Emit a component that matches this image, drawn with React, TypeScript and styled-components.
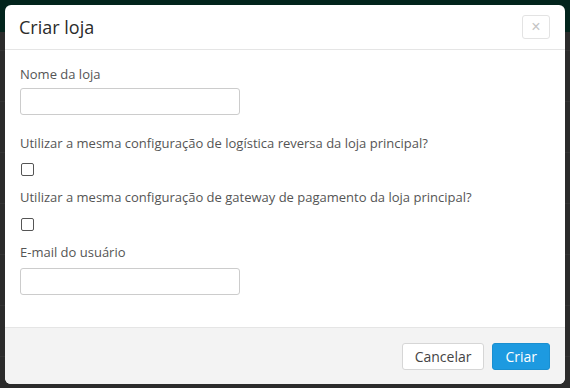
import styled, { createGlobalStyle } from 'styled-components';

const GlobalStyle = createGlobalStyle`
  html, body {
    margin: 0;
    padding: 0;
    width: 570px;
    height: 388px;
    overflow: hidden;
    font-family: 'Open Sans', 'Liberation Sans', sans-serif;
  }
`;

const Backdrop = styled.div`
  width: 570px;
  height: 388px;
  box-sizing: border-box;
  padding: 5px;
  background:
    linear-gradient(to bottom, #02241c 0, #02241c 32px, transparent 32px),
    repeating-linear-gradient(to bottom, #2b2b2b 0, #2b2b2b 50px, #333 50px, #333 51px);
  background-color: #2b2b2b;
`;

const Modal = styled.div`
  width: 560px;
  height: 379px;
  background: #fff;
  border-radius: 6px;
  overflow: hidden;
  display: flex;
  flex-direction: column;
`;

const Header = styled.div`
  height: 45px;
  box-sizing: border-box;
  padding: 0 15px 0 14px;
  border-bottom: 1px solid #e5e5e5;
  display: flex;
  align-items: center;
  justify-content: space-between;
`;

const Title = styled.h4`
  margin: 0;
  font-size: 18px;
  font-weight: 400;
  color: #2b2b2b;
`;

const CloseButton = styled.button`
  width: 28px;
  height: 24px;
  padding: 0;
  border: 1px solid #e3e3e3;
  border-radius: 3px;
  background: #fff;
  color: #c4c4c4;
  font-size: 16px;
  line-height: 1;
  display: flex;
  align-items: center;
  justify-content: center;
`;

const Body = styled.div`
  flex: 1;
  padding: 14px 15px 0;
`;

const FormGroup = styled.div<{ $gap?: number }>`
  margin-bottom: ${(p) => p.$gap ?? 11}px;
`;

const Label = styled.label`
  display: block;
  font-size: 13px;
  line-height: 20px;
  color: #555;
  margin-bottom: 4px;
`;

const Input = styled.input`
  display: block;
  width: 220px;
  height: 27px;
  box-sizing: border-box;
  border: 1px solid #ccc;
  border-radius: 3px;
  background: #fff;
`;

const Checkbox = styled.input<{ $top?: number }>`
  display: block;
  width: 13px;
  height: 13px;
  margin: ${(p) => p.$top ?? 11}px 0 0 1px;
  appearance: none;
  border: 1px solid #555;
  border-radius: 2px;
  background: #fff;
`;

const Footer = styled.div`
  height: 57px;
  box-sizing: border-box;
  border-top: 1px solid #e5e5e5;
  background: #f3f3f3;
  padding: 0 15px;
  display: flex;
  align-items: center;
  justify-content: flex-end;
  gap: 8px;
`;

const Button = styled.button<{ $primary?: boolean }>`
  height: 27px;
  box-sizing: border-box;
  padding: 0 12px;
  border-radius: 3px;
  font-family: 'Open Sans', 'Liberation Sans', sans-serif;
  font-size: 14px;
  border: 1px solid ${(p) => (p.$primary ? '#1a8fd0' : '#d6d6d6')};
  background: ${(p) => (p.$primary ? '#1d9ae0' : '#fff')};
  color: ${(p) => (p.$primary ? '#fff' : '#444')};
`;

export default function App() {
  return (
    <>
      <GlobalStyle />
      <Backdrop>
        <Modal>
          <Header>
            <Title>Criar loja</Title>
            <CloseButton>×</CloseButton>
          </Header>
          <Body>
            <FormGroup $gap={18}>
              <Label>Nome da loja</Label>
              <Input />
            </FormGroup>
            <FormGroup>
              <Label>Utilizar a mesma configuração de logística reversa da loja principal?</Label>
              <Checkbox type="checkbox" $top={10} />
            </FormGroup>
            <FormGroup>
              <Label>Utilizar a mesma configuração de gateway de pagamento da loja principal?</Label>
              <Checkbox type="checkbox" />
            </FormGroup>
            <FormGroup>
              <Label style={{ marginBottom: 6 }}>E-mail do usuário</Label>
              <Input />
            </FormGroup>
          </Body>
          <Footer>
            <Button>Cancelar</Button>
            <Button $primary>Criar</Button>
          </Footer>
        </Modal>
      </Backdrop>
    </>
  );
}
